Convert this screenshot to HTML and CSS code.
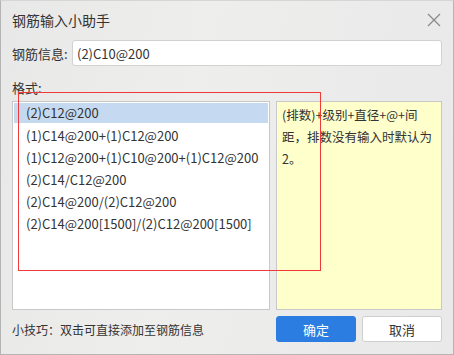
FILE: index.html
```html
<!DOCTYPE html>
<html>
<head>
  <title>钢筋输入小助手</title>
  <link rel="stylesheet" href="styles.css">
</head>
<body>
  <div class="dialog">
    <div class="title-bar">
      <span class="title">钢筋输入小助手</span>
      <svg class="close" width="14" height="14" viewBox="0 0 14 14">
        <path d="M1 1 L13 13 M13 1 L1 13" stroke="#8a8a8a" stroke-width="1.3" fill="none"/>
      </svg>
    </div>

    <div class="field-row">
      <label for="rebar-info">钢筋信息:</label>
      <input type="text" id="rebar-info" value="(2)C10@200">
    </div>

    <div class="format-label">格式:</div>

    <div class="format-area">
      <ul class="format-list">
        <li class="selected">(2)C12@200</li>
        <li>(1)C14@200+(1)C12@200</li>
        <li>(1)C12@200+(1)C10@200+(1)C12@200</li>
        <li>(2)C14/C12@200</li>
        <li>(2)C14@200/(2)C12@200</li>
        <li>(2)C14@200[1500]/(2)C12@200[1500]</li>
      </ul>
      <div class="format-help">(排数)+级别+直径+@+间距，排数没有输入时默认为2。</div>
    </div>

    <div class="footer">
      <span class="tip">小技巧：双击可直接添加至钢筋信息</span>
      <div class="buttons">
        <button class="btn primary">确定</button>
        <button class="btn">取消</button>
      </div>
    </div>

    <!-- highlight frame drawn over the list -->
    <div class="highlight"></div>
  </div>
</body>
</html>
```

FILE: styles.css
```css
html, body {
  margin: 0;
  padding: 0;
}

body {
  font-family: "Noto Sans CJK SC", "Noto Sans", sans-serif;
  font-size: 12px;
  color: #333;
}

.dialog {
  position: relative;
  width: 454px;
  height: 355px;
  box-sizing: border-box;
  border: 1px solid #b4b4b4;
  border-top-color: #d6d6d6;
  background: linear-gradient(100deg, #e8e8e8 0%, #eeeeec 40%, #ebebeb 70%, #e9e9e9 100%);
  padding: 0 11px;
}

.title-bar {
  display: flex;
  justify-content: space-between;
  align-items: center;
  height: 38px;
}

.title {
  font-size: 14px;
  color: #333;
}

.close {
  margin-right: 1px;
}

.field-row {
  display: flex;
  align-items: center;
  height: 26px;
  margin-top: 1px;
}

.field-row label {
  width: 60px;
  flex: none;
  font-size: 13px;
}

.field-row input {
  flex: 1;
  height: 26px;
  box-sizing: border-box;
  border: 1px solid #d2d2d2;
  border-radius: 3px;
  padding: 0 4px;
  font-family: inherit;
  font-size: 13px;
  color: #333;
  background: #fff;
  outline: none;
}

.format-label {
  margin-top: 12px;
  line-height: 20px;
  font-size: 13px;
}

.format-area {
  display: flex;
  gap: 6px;
  margin-top: 3px;
  height: 209px;
}

.format-list {
  list-style: none;
  margin: 0;
  padding: 1px;
  width: 258px;
  box-sizing: border-box;
  background: #fff;
  border: 1px solid #c8c8c8;
  font-size: 13px;
}

.format-list li {
  height: 22px;
  line-height: 21px;
  padding-left: 12px;
  white-space: nowrap;
}

.format-list li.selected {
  background: #c5daf0;
  height: 20px;
  line-height: 20px;
  margin-bottom: 2px;
}

.format-help {
  flex: 1;
  box-sizing: border-box;
  background: #ffffcc;
  border: 1px solid #c8c8c8;
  padding: 2px 6px 0 5px;
  line-height: 22px;
  font-size: 12.5px;
}

.footer {
  display: flex;
  justify-content: space-between;
  align-items: center;
  margin-top: 6px;
}

.tip {
  font-size: 12px;
}

.buttons {
  display: flex;
  gap: 6px;
}

.btn {
  width: 80px;
  height: 26px;
  border: 1px solid #cfcfcf;
  border-radius: 3px;
  background: #fff;
  color: #333;
  font-family: inherit;
  font-size: 13px;
  padding: 0;
  cursor: pointer;
}

.btn.primary {
  background: #2b7de1;
  border-color: #2b7de1;
  color: #fff;
}

.highlight {
  position: absolute;
  left: 17px;
  top: 91px;
  width: 301px;
  height: 177px;
  border: 1px solid #f03a3a;
  pointer-events: none;
}
```
